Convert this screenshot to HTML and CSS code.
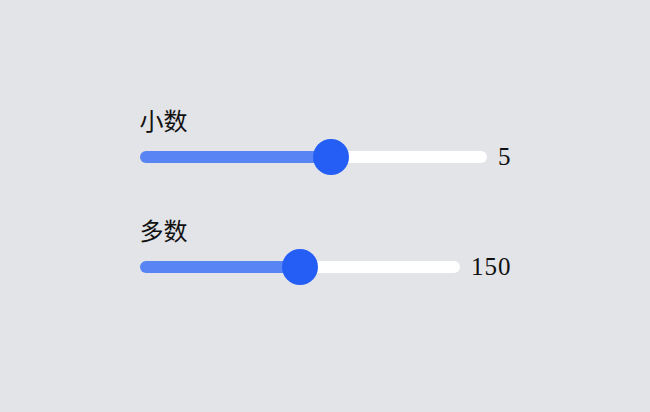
FILE: index.html
```html
<!DOCTYPE html>
<html lang="zh-CN">
<head>
    <meta charset="UTF-8">
    <meta name="viewport" content="width=device-width, initial-scale=1.0">
    <title>Sliders</title>
    <link rel="stylesheet" href="styles.css">
</head>
<body>
    <div class="panel">
        <div class="field">
            <label class="field-label" for="small">小数</label>
            <div class="slider-row">
                <input class="slider" id="small" type="range" min="0" max="9" value="5" style="--fill: 54.9%">
                <span class="slider-value">5</span>
            </div>
        </div>
        <div class="field">
            <label class="field-label" for="large">多数</label>
            <div class="slider-row">
                <input class="slider" id="large" type="range" min="0" max="300" value="150" style="--fill: 50%">
                <span class="slider-value">150</span>
            </div>
        </div>
    </div>
</body>
</html>
```

FILE: styles.css
```css
* {
    margin: 0;
    padding: 0;
    box-sizing: border-box;
}

body {
    background: #e2e4e8;
    color: #111;
    font-family: 'Noto Sans CJK SC', sans-serif;
    padding-top: 104px;
}

.panel {
    width: 371px;
    margin: 0 auto;
    display: flex;
    flex-direction: column;
    gap: 39px;
}

.field {
    display: flex;
    flex-direction: column;
}

.field-label {
    font-size: 24px;
    line-height: 32px;
    margin-bottom: 3px;
}

.slider-row {
    display: flex;
    align-items: center;
    gap: 11px;
    height: 36px;
}

.slider-value {
    font-family: 'Liberation Serif', serif;
    font-size: 25px;
    line-height: 36px;
    letter-spacing: 1px;
    margin-right: -1px;
}

.slider {
    -webkit-appearance: none;
    appearance: none;
    flex: 1;
    min-width: 0;
    height: 36px;
    background: transparent;
    outline: none;
}

.slider::-webkit-slider-runnable-track {
    height: 12px;
    border-radius: 6px;
    background: linear-gradient(to right, #5884f4 var(--fill), #fff var(--fill));
}

.slider::-webkit-slider-thumb {
    -webkit-appearance: none;
    width: 36px;
    height: 36px;
    margin-top: -12px;
    border-radius: 50%;
    background: #245ef5;
    border: none;
}
```
